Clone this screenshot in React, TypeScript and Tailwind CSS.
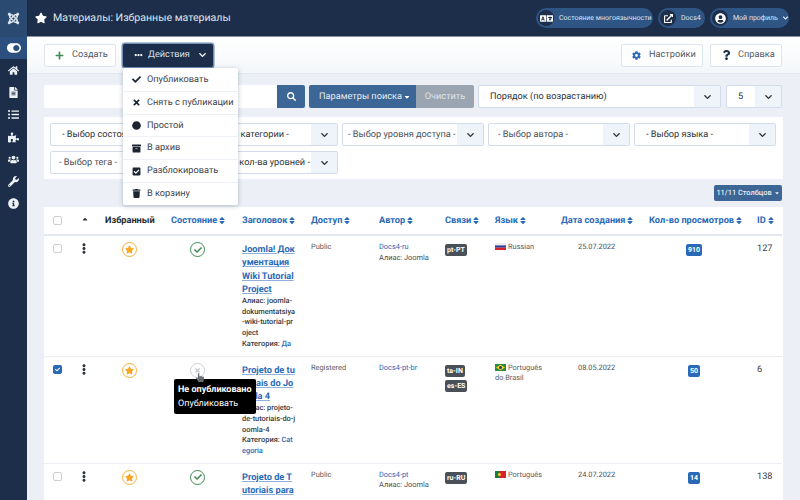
import React from "react";
import {
  FaJoomla, FaToggleOn, FaHome, FaFileAlt, FaListUl, FaPuzzlePiece, FaUsers, FaWrench, FaInfoCircle,
  FaStar, FaLanguage, FaExternalLinkAlt, FaUserCircle, FaChevronDown, FaPlus, FaEllipsisH,
  FaCog, FaQuestion, FaCheck, FaTimes, FaCircle, FaArchive, FaCheckSquare, FaTrash, FaSearch,
  FaSort, FaEllipsisV, FaHandPointer, FaCaretDown, FaSortUp,
} from "react-icons/fa";

const Select = ({ label, className, dark, alignEnd }: { label: string; className: string; dark?: boolean; alignEnd?: boolean }) => (
  <div className={`flex h-[23px] items-stretch overflow-hidden rounded-[2px] border border-[#d3dcea] bg-white ${className}`}>
    <span className={`flex flex-1 overflow-hidden whitespace-nowrap text-[9.2px] leading-[22px] ${alignEnd ? "justify-end pr-[1px]" : ""} ${dark ? "text-[#2e3338]" : "text-[#4a5058]"}`}>
      <span className="shrink-0">{label}</span>
    </span>
    <span className="flex w-[26px] shrink-0 items-center justify-center bg-[#eff3fa] text-[#30363d]">
      <FaChevronDown className="h-[8px] w-[9px]" />
    </span>
  </div>
);

const ToolButton = ({ icon, label, className }: { icon: React.ReactNode; label: string; className: string }) => (
  <div className={`flex h-[23px] items-center rounded-[2px] border border-[#dfe5ee] bg-white text-[9.2px] text-[#4f555c] ${className}`}>
    {icon}
    <span>{label}</span>
  </div>
);

const Pill = ({ icon, label, className, caret }: { icon: React.ReactNode; label: string; className: string; caret?: boolean }) => (
  <div className={`flex h-[20px] items-center rounded-full bg-[#2f5585] pl-[2px] text-[7px] text-[#dbe4ef] ${className}`}>
    <span className="flex h-[16px] w-[16px] shrink-0 items-center justify-center rounded-full bg-[#1c2e4a] text-white">{icon}</span>
    <span className="ml-[5px] whitespace-nowrap">{label}</span>
    {caret && <FaChevronDown className="ml-[4px] h-[6px] w-[7px] text-white" />}
  </div>
);

const Th = ({ label, className }: { label: string; className?: string }) => (
  <th className={`p-0 text-left align-middle ${className ?? ""}`}>
    <span className="flex items-center whitespace-nowrap text-[9.2px] font-bold leading-[12px] text-[#2a69b8]">
      {label}
      <FaSort className="ml-[2px] h-[9px] w-[6px]" />
    </span>
  </th>
);

const Checkbox = ({ checked }: { checked?: boolean }) =>
  checked ? (
    <span className="flex h-[9px] w-[9px] items-center justify-center rounded-[2px] bg-[#2a69b8] text-white">
      <FaCheck className="h-[5px] w-[5px]" />
    </span>
  ) : (
    <span className="block h-[9px] w-[9px] rounded-[2px] border border-[#ccd0d5] bg-white" />
  );

const Badge = ({ label, blue }: { label: string; blue?: boolean }) => (
  <span className={`block w-fit rounded-[2px] px-[2px] text-[7px] font-bold leading-[12px] text-white ${blue ? "bg-[#2a69b8]" : "bg-[#495057]"}`}>
    {label}
  </span>
);

const FlagRu = () => (
  <svg width="11" height="7" viewBox="0 0 11 7" className="mr-[2px] inline-block align-[-1px]">
    <rect width="11" height="2.4" fill="#eee" />
    <rect y="2.4" width="11" height="2.3" fill="#2a3f9d" />
    <rect y="4.7" width="11" height="2.3" fill="#d8232a" />
  </svg>
);
const FlagBr = () => (
  <svg width="11" height="7" viewBox="0 0 11 7" className="mr-[2px] inline-block align-[-1px]">
    <rect width="11" height="7" fill="#2a8c3a" />
    <path d="M5.5.8 10 3.5 5.5 6.2 1 3.5z" fill="#f3d02b" />
    <circle cx="5.5" cy="3.5" r="1.5" fill="#23397f" />
  </svg>
);
const FlagPt = () => (
  <svg width="11" height="7" viewBox="0 0 11 7" className="mr-[2px] inline-block align-[-1px]">
    <rect width="11" height="7" fill="#d8232a" />
    <rect width="4.4" height="7" fill="#1f7a3a" />
    <circle cx="4.4" cy="3.5" r="1.5" fill="#f3d02b" />
  </svg>
);

const StarMark = () => (
  <span className="flex h-[15px] w-[15px] items-center justify-center rounded-full border-[1.5px] border-[#f9b13a] text-[#f9a825]">
    <FaStar className="h-[9px] w-[9px]" />
  </span>
);

type RowData = {
  height: string;
  checked?: boolean;
  published: boolean;
  title: string[];
  meta: React.ReactNode;
  access: string;
  author: string;
  authorAlias?: boolean;
  links: string[];
  lang: React.ReactNode;
  date: string;
  views: string;
  viewsClass: string;
  id: string;
};

const rows: RowData[] = [
  {
    height: "h-[121px]",
    published: true,
    title: ["Joomla! Док", "ументация", "Wiki Tutorial", "Project"],
    meta: (
      <>
        Алиас: joomla-<br />dokumentatsiya<br />-wiki-tutorial-pr<br />oject<br />
        Категория: <span className="text-[#2a69b8]">Да</span>
      </>
    ),
    access: "Public",
    author: "Docs4-ru",
    authorAlias: true,
    links: ["pt-PT"],
    lang: <><FlagRu />Russian</>,
    date: "25.07.2022",
    views: "910",
    viewsClass: "pl-[37px]",
    id: "127",
  },
  {
    height: "h-[107px]",
    checked: true,
    published: false,
    title: ["Projeto de tu", "toriais do Jo", "omla 4"],
    meta: (
      <>
        Алиас: projeto-<br />de-tutoriais-do-j<br />oomla-4<br />
        Категория: <span className="text-[#2a69b8]">Cat<br />egoria</span>
      </>
    ),
    access: "Registered",
    author: "Docs4-pt-br",
    links: ["ta-IN", "es-ES"],
    lang: <><FlagBr />Português<br />do Brasil</>,
    date: "08.05.2022",
    views: "50",
    viewsClass: "pl-[39px]",
    id: "6",
  },
  {
    height: "h-[60px]",
    published: true,
    title: ["Projeto de T", "utoriais para"],
    meta: null,
    access: "Public",
    author: "Docs4-pt",
    authorAlias: true,
    links: ["ru-RU"],
    lang: <><FlagPt />Português</>,
    date: "24.07.2022",
    views: "14",
    viewsClass: "pl-[39px]",
    id: "138",
  },
];

const menuItems = [
  { icon: <FaCheck className="h-[9px] w-[9px]" />, label: "Опубликовать" },
  { icon: <FaTimes className="h-[9px] w-[9px]" />, label: "Снять с публикации" },
  { icon: <FaCircle className="h-[9px] w-[9px]" />, label: "Простой" },
  { icon: <FaArchive className="h-[9px] w-[9px]" />, label: "В архив" },
  { icon: <FaCheckSquare className="h-[9px] w-[9px]" />, label: "Разблокировать" },
  { icon: <FaTrash className="h-[9px] w-[9px]" />, label: "В корзину" },
];

const sideIcons = [FaHome, FaFileAlt, FaListUl, FaPuzzlePiece, FaUsers, FaWrench, FaInfoCircle];

export default function App() {
  return (
    <div className="flex h-[500px] w-[800px] overflow-hidden bg-[#ecf0f6] font-['Roboto',sans-serif] [text-rendering:geometricPrecision]">
      {/* Sidebar */}
      <aside className="flex w-[27px] shrink-0 flex-col bg-[#1c2e4a] text-white">
        <div className="flex h-[37px] items-center justify-center bg-[#2a4a72]">
          <FaJoomla className="h-[13px] w-[13px] text-[#dfe6ef]" />
        </div>
        <div className="flex h-[22px] items-center justify-center bg-[#2b5080]">
          <FaToggleOn className="h-[14px] w-[14px]" />
        </div>
        {sideIcons.map((Icon, i) => (
          <div key={i} className="flex h-[22.3px] items-center justify-center">
            <Icon className="h-[11px] w-[11px] text-[#eef2f7]" />
          </div>
        ))}
      </aside>

      <div className="relative flex min-w-0 flex-1 flex-col">
        {/* Header */}
        <header className="flex h-[37px] shrink-0 items-center border-b border-[#8a94a0] bg-[#1c2e4a] pl-[8px] pr-[11px]">
          <FaStar className="h-[12px] w-[12px] text-white" />
          <span className="ml-[6px] text-[10.6px] text-[#dfe5ec]">Материалы: Избранные материалы</span>
          <Pill className="ml-auto w-[117px]" icon={<FaLanguage className="h-[13px] w-[13px]" />} label="Состояние многоязычности" />
          <Pill className="ml-[5px] w-[47px]" icon={<FaExternalLinkAlt className="h-[9px] w-[9px]" />} label="Docs4" />
          <Pill className="ml-[5px] w-[79px]" icon={<FaUserCircle className="h-[11px] w-[11px]" />} label="Мой профиль" caret />
        </header>

        {/* Toolbar */}
        <div className="flex h-[37px] shrink-0 items-center border-b border-[#e4e9f0] bg-gradient-to-b from-white to-[#f4f7fa] pl-[17px] pr-[18px]">
          <ToolButton className="w-[72px] pl-[10px]" icon={<FaPlus className="mr-[8px] h-[9px] w-[9px] text-[#3f8b55]" />} label="Создать" />
          <div className="ml-[7px] flex h-[23px] w-[90px] items-center rounded-[2px] bg-[#1c2e4a] pl-[11px] text-[9.2px] text-[#d9e0e9] ring-[1.5px] ring-[#6f8fb3]">
            <FaEllipsisH className="mr-[5px] h-[8px] w-[9px] text-white" />
            <span>Действия</span>
            <FaChevronDown className="ml-[8px] h-[8px] w-[9px] text-white" />
          </div>
          <ToolButton className="ml-auto w-[82px] pl-[10px]" icon={<FaCog className="mr-[8px] h-[9px] w-[9px] text-[#2a69b8]" />} label="Настройки" />
          <ToolButton className="ml-[7px] w-[72px] pl-[11px]" icon={<FaQuestion className="mr-[7px] h-[10px] w-[9px] text-[#1c2e4a]" />} label="Справка" />
        </div>

        {/* Search row */}
        <div className="mt-[11px] flex h-[23px] shrink-0 pl-[17px] pr-[18px]">
          <div className="w-[233px] rounded-l-[2px] bg-white" />
          <div className="flex w-[28px] items-center justify-center rounded-r-[2px] bg-[#3b6696] text-white">
            <FaSearch className="h-[9px] w-[9px]" />
          </div>
          <div className="ml-[4px] flex w-[107px] items-center whitespace-nowrap rounded-l-[2px] bg-[#3b6696] pl-[10px] text-[9.2px] text-[#e6ecf3]">
            Параметры поиска
            <FaCaretDown className="ml-[1px] h-[8px] w-[8px] text-white" />
          </div>
          <div className="flex w-[58px] items-center justify-center rounded-r-[2px] bg-[#9aa5b1] text-[9.2px] text-[#dfe4ea]">Очистить</div>
          <Select className="ml-[4px] w-[243px] pl-[11px]" label="Порядок (по возрастанию)" dark />
          <Select className="ml-[5px] w-[56px] pl-[11px]" label="5" dark />
        </div>

        {/* Filters */}
        <div className="mx-[17px] mt-[9px] flex h-[62px] shrink-0 flex-col gap-[5px] bg-white py-[6px] pl-[6px] pr-[5px]">
          <div className="flex gap-[4px]">
            <Select className="w-[142px] pl-[11px]" label="- Выбор состояния -" dark />
            <Select className="w-[142px] pl-[8px]" label="- Выбор категории -" dark />
            <Select className="w-[142px] pl-[5px]" label="- Выбор уровня доступа -" />
            <Select className="w-[142px] pl-[9px]" label="- Выбор автора -" />
            <Select className="w-[142px] pl-[11px]" label="- Выбор языка -" dark />
          </div>
          <div className="flex gap-[4px]">
            <Select className="w-[142px] pl-[8px]" label="- Выбор тега -" />
            <Select className="w-[142px]" label="- Выбор до кол-ва уровней -" dark alignEnd />
          </div>
        </div>

        {/* Columns button */}
        <div className="mt-[6px] flex shrink-0 justify-end pr-[18px]">
          <div className="flex h-[16px] w-[68px] items-center justify-center whitespace-nowrap rounded-[2px] bg-[#3b6696] text-[7.4px] font-medium text-[#e6ecf3]">
            11/11 Столбцов
            <FaCaretDown className="ml-[2px] h-[6px] w-[6px]" />
          </div>
        </div>

        {/* Table */}
        <div className="mx-[17px] mt-[6px] shrink-0 bg-white">
          <table className="w-[738px] table-fixed">
            <colgroup>
              <col className="w-[30px]" />
              <col className="w-[26px]" />
              <col className="w-[59px]" />
              <col className="w-[83px]" />
              <col className="w-[69px]" />
              <col className="w-[68px]" />
              <col className="w-[66px]" />
              <col className="w-[50px]" />
              <col className="w-[66px]" />
              <col className="w-[88px]" />
              <col className="w-[108px]" />
              <col className="w-[25px]" />
            </colgroup>
            <thead>
              <tr className="h-[28px] border-b-2 border-[#e3e8ef]">
                <th className="p-0 pl-[9px] align-middle"><Checkbox /></th>
                <th className="p-0 pl-[7px] align-middle"><FaSortUp className="h-[8px] w-[8px] text-[#30363d]" /></th>
                <th className="p-0 pl-[5px] text-left align-middle text-[9.2px] font-bold leading-[12px] text-[#24292e]">Избранный</th>
                <Th label="Состояние" className="pl-[12px]" />
                <Th label="Заголовок" />
                <Th label="Доступ" />
                <Th label="Автор" />
                <Th label="Связи" />
                <Th label="Язык" />
                <Th label="Дата создания" />
                <Th label="Кол-во просмотров" />
                <Th label="ID" />
              </tr>
            </thead>
            <tbody>
              {rows.map((row) => (
                <tr key={row.id} className={`${row.height} border-b border-[#ebeef2]`}>
                  <td className="p-0 pl-[9px] pt-[8px] align-top"><Checkbox checked={row.checked} /></td>
                  <td className="p-0 pl-[5px] pt-[7px] align-top"><FaEllipsisV className="h-[11px] w-[10px] text-[#30363d]" /></td>
                  <td className="p-0 pl-[22px] pt-[6px] align-top"><StarMark /></td>
                  <td className="p-0 pl-[31px] pt-[6px] align-top">
                    <span className={`flex h-[15px] w-[15px] items-center justify-center rounded-full border-[1.5px] ${row.published ? "border-[#3f8b55] text-[#3f8b55]" : "border-[#cfd2d6] text-[#c4c7cb]"}`}>
                      {row.published ? <FaCheck className="h-[8px] w-[8px]" /> : <FaTimes className="h-[7px] w-[7px]" />}
                    </span>
                  </td>
                  <td className="p-0 pt-[7px] align-top">
                    <div className="whitespace-nowrap text-[9.2px] font-bold leading-[13.3px] text-[#2a69b8] underline decoration-[#8fb0dc]">
                      {row.title.map((line) => (
                        <div key={line}>{line}</div>
                      ))}
                    </div>
                    {row.meta && (
                      <div className="whitespace-nowrap text-[7.4px] font-medium leading-[10.6px] text-[#33383d]">{row.meta}</div>
                    )}
                  </td>
                  <td className="p-0 pt-[6px] align-top text-[7.4px] leading-[10.6px] text-[#5a6067]">{row.access}</td>
                  <td className="p-0 pt-[6px] align-top text-[7.4px] leading-[10.6px]">
                    <div className="text-[#2a69b8]">{row.author}</div>
                    {row.authorAlias && <div className="text-[#4a5058]">Алиас: Joomla</div>}
                  </td>
                  <td className="p-0 pt-[8px] align-top">
                    <div className="flex flex-col items-start gap-[3px]">
                      {row.links.map((l) => (
                        <Badge key={l} label={l} />
                      ))}
                    </div>
                  </td>
                  <td className="p-0 pt-[6px] align-top text-[7.4px] leading-[10.6px] text-[#5a6067]">{row.lang}</td>
                  <td className="p-0 pl-[17px] pt-[6px] align-top text-[7.4px] leading-[10.6px] text-[#4a5058]">{row.date}</td>
                  <td className={`p-0 pt-[8px] align-top ${row.viewsClass}`}><Badge label={row.views} blue /></td>
                  <td className="p-0 pt-[7px] align-top text-[9.2px] leading-[12px] text-[#3c4146]">{row.id}</td>
                </tr>
              ))}
            </tbody>
          </table>
        </div>

        {/* Actions dropdown */}
        <div className="absolute left-[96px] top-[68px] w-[115px] rounded-[2px] bg-white shadow-[0_1px_5px_rgba(30,50,80,0.3)]">
          {menuItems.map((item, i) => (
            <div key={item.label} className={`flex h-[22.8px] items-center pl-[8px] text-[9.2px] text-[#3d4249] ${i > 0 ? "border-t border-[#eef1f5]" : ""}`}>
              <span className="flex w-[10px] items-center justify-center text-[#1c2530]">{item.icon}</span>
              <span className="ml-[6px] whitespace-nowrap">{item.label}</span>
            </div>
          ))}
        </div>

        {/* Tooltip */}
        <div className="absolute left-[147px] top-[379px] h-[35px] w-[82px] rounded-[2px] bg-black pl-[4px] pt-[5px] text-[9px] leading-[13.5px] text-white">
          <div className="font-bold">Не опубликовано</div>
          <div>Опубликовать</div>
        </div>
        <FaHandPointer className="absolute left-[169px] top-[373px] h-[9px] w-[8px] text-[#6b7077]" />
      </div>
    </div>
  );
}
